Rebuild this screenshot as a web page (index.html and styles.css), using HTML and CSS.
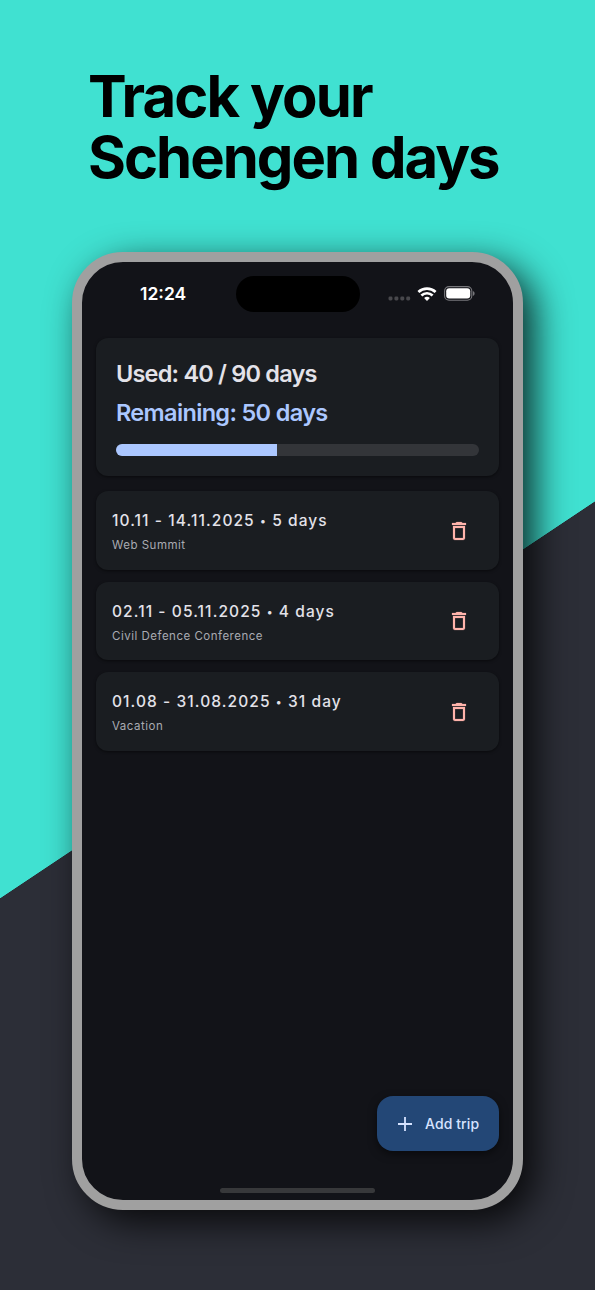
FILE: index.html
```
<!DOCTYPE html>
<html lang="en">
<head>
    <meta charset="UTF-8">
    <meta name="viewport" content="width=device-width, initial-scale=1.0">
    <title>Track your Schengen days</title>
    <link rel="stylesheet" href="styles.css">
</head>
<body>

    <h1 class="headline">
        <span class="line-one">Track your</span>
        <span class="line-two">Schengen days</span>
    </h1>

    <div class="phone">
        <!-- Status bar -->
        <div class="status-bar">
            <span class="time">12:24</span>
            <div class="island"></div>
            <div class="status-icons">
                <svg class="dots" width="23" height="5" viewBox="0 0 23 5" fill="#48484c">
                    <rect x="0.5" y="0.5" width="4" height="4" rx="1.4"/>
                    <rect x="6.4" y="0.5" width="4" height="4" rx="1.4"/>
                    <rect x="12.3" y="0.5" width="4" height="4" rx="1.4"/>
                    <rect x="18.2" y="0.5" width="4" height="4" rx="1.4"/>
                </svg>
                <svg class="wifi" width="20" height="14" viewBox="0 0 20 14" fill="none" stroke="#fff" stroke-width="2.7">
                    <path d="M1.4 5.1a12.6 12.6 0 0 1 17.2 0"/>
                    <path d="M4.4 8.5a8.1 8.1 0 0 1 11.2 0"/>
                    <path d="M10 14L7.1 11.1a4.3 4.3 0 0 1 5.8 0z" fill="#fff" stroke="none"/>
                </svg>
                <svg class="battery" width="32" height="15" viewBox="0 0 32 15">
                    <rect x="0.6" y="0.6" width="27.2" height="13.6" rx="4.4" fill="none" stroke="#77777b" stroke-width="1.1"/>
                    <rect x="2.2" y="2.2" width="24" height="10.4" rx="3" fill="#fff"/>
                    <path d="M28.9 5v5c1.1-.4 1.7-1.4 1.7-2.5s-.6-2.1-1.7-2.5z" fill="#77777b"/>
                </svg>
            </div>
        </div>

        <!-- Summary -->
        <div class="card summary">
            <div class="used">Used: 40 / 90 days</div>
            <div class="remaining">Remaining: 50 days</div>
            <div class="progress"><div class="progress-fill" style="width: 44.44%"></div></div>
        </div>

        <!-- Trips -->
        <div class="trips">
            <div class="card trip">
                <div class="trip-info">
                    <div class="trip-dates">10.11 - 14.11.2025 <span class="bullet">•</span> 5 days</div>
                    <div class="trip-name">Web Summit</div>
                </div>
                <svg class="trash" width="24" height="24" viewBox="0 0 24 24"><path d="M6 19c0 1.1.9 2 2 2h8c1.1 0 2-.9 2-2V7H6v12zM8 9h8v10H8V9zm7.5-5l-1-1h-5l-1 1H5v2h14V4z"/></svg>
            </div>
            <div class="card trip">
                <div class="trip-info">
                    <div class="trip-dates">02.11 - 05.11.2025 <span class="bullet">•</span> 4 days</div>
                    <div class="trip-name">Civil Defence Conference</div>
                </div>
                <svg class="trash" width="24" height="24" viewBox="0 0 24 24"><path d="M6 19c0 1.1.9 2 2 2h8c1.1 0 2-.9 2-2V7H6v12zM8 9h8v10H8V9zm7.5-5l-1-1h-5l-1 1H5v2h14V4z"/></svg>
            </div>
            <div class="card trip">
                <div class="trip-info">
                    <div class="trip-dates">01.08 - 31.08.2025 <span class="bullet">•</span> 31 day</div>
                    <div class="trip-name">Vacation</div>
                </div>
                <svg class="trash" width="24" height="24" viewBox="0 0 24 24"><path d="M6 19c0 1.1.9 2 2 2h8c1.1 0 2-.9 2-2V7H6v12zM8 9h8v10H8V9zm7.5-5l-1-1h-5l-1 1H5v2h14V4z"/></svg>
            </div>
        </div>

        <button class="add-trip">
            <svg width="14" height="14" viewBox="0 0 14 14" stroke="#d6e3ff" stroke-width="1.8"><path d="M7 0v14M0 7h14"/></svg>
            <span>Add trip</span>
        </button>

        <div class="home-bar"></div>
    </div>

</body>
</html>
```
FILE: styles.css
```
* {
    box-sizing: border-box;
}

body {
    margin: 0;
    width: 595px;
    height: 1290px;
    overflow: hidden;
    font-family: Inter, "Liberation Sans", sans-serif;
    background-color: #2c2e37;
    background-image: linear-gradient(to bottom right, #40e1d1 50%, #2c2e37 50.1%);
    background-size: 595px 397px;
    background-position: 0 501px;
    background-repeat: no-repeat;
}

body::before {
    content: "";
    display: block;
    height: 501px;
    margin-bottom: -501px;
    background: #40e1d1;
}

.headline {
    position: relative;
    margin: 0;
    padding: 66px 0 0 88px;
    height: 252px;
    font-size: 58px;
    font-weight: 700;
    line-height: 61px;
    color: #000;
    white-space: nowrap;
}

.headline span {
    display: block;
}

.line-one {
    letter-spacing: -1.9px;
}

.line-two {
    letter-spacing: -2px;
}

.phone {
    position: relative;
    display: flex;
    flex-direction: column;
    width: 451px;
    height: 958px;
    margin-left: 72px;
    padding: 0 14px;
    background: #121318;
    border: 10px solid #a0a0a0;
    border-radius: 51px;
    box-shadow: 12px 12px 36px rgba(0, 0, 0, 0.8);
}

.status-bar {
    display: grid;
    grid-template-columns: 140px 124px 139px;
    align-items: center;
    height: 63px;
    margin-bottom: 13px;
}

.time {
    padding-left: 44px;
    font-size: 17.5px;
    font-weight: 600;
    color: #fff;
}

.island {
    height: 36px;
    border-radius: 18px;
    background: #000;
}

.status-icons {
    display: flex;
    align-items: center;
    padding-left: 28px;
}

.dots {
    margin: 9px 6px 0 0;
}

.wifi {
    margin-right: 7px;
}

.card {
    background: #1a1d21;
    border-radius: 12px;
    box-shadow: 0 1px 3px rgba(0, 0, 0, 0.5);
}

.summary {
    height: 138px;
    padding: 20px;
    margin-bottom: 15px;
    font-size: 23.5px;
    font-weight: 600;
    line-height: 32px;
    white-space: nowrap;
}

.used {
    color: #e3e2e9;
    letter-spacing: -0.8px;
}

.remaining {
    margin-top: 7px;
    color: #abc7ff;
    letter-spacing: -0.66px;
}

.progress {
    height: 12px;
    margin-top: 15px;
    border-radius: 6px;
    background: #333539;
    overflow: hidden;
}

.progress-fill {
    height: 100%;
    background: #abc7ff;
}

.trips {
    display: grid;
    gap: 12px;
}

.trip {
    display: flex;
    align-items: center;
    justify-content: space-between;
    height: 78.5px;
    padding: 1px 28px 0 16px;
}

.trip-dates {
    padding-top: 3px;
    font-size: 15.5px;
    font-weight: 500;
    line-height: 24px;
    letter-spacing: 1.08px;
    color: #e3e2e9;
    white-space: nowrap;
}

.bullet {
    font-size: 11px;
    vertical-align: 1px;
}

.trip-name {
    margin-top: 2px;
    font-size: 11.5px;
    line-height: 20px;
    letter-spacing: 0.5px;
    color: #a9abb2;
}

.trash {
    fill: #ffb4ab;
    stroke: #ffb4ab;
    stroke-width: 0.2;
}

.add-trip {
    display: flex;
    align-items: center;
    gap: 13px;
    width: 122px;
    height: 55px;
    margin: auto 0 37px auto;
    padding: 0 0 0 21px;
    border: none;
    border-radius: 16px;
    background: #234776;
    box-shadow: 0 3px 8px rgba(0, 0, 0, 0.5);
    font-family: inherit;
    font-size: 14px;
    font-weight: 500;
    letter-spacing: 0.1px;
    color: #d6e3ff;
    white-space: nowrap;
}

.home-bar {
    width: 155px;
    height: 5px;
    margin: 0 auto 7px 124px;
    border-radius: 3px;
    background: #37383a;
}
```
